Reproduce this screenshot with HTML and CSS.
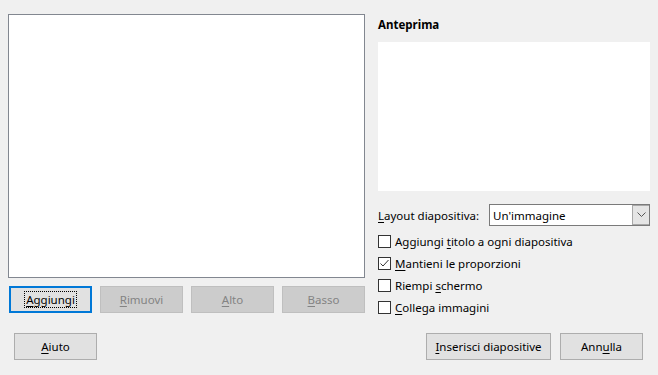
FILE: index.html
```html
<!doctype html>
<html lang="it">

<head>
  <meta charset="utf-8">
  <title>Album fotografico</title>
  <link rel="stylesheet" href="styles.css">
</head>

<body>
  <div class="dialog">
    <div class="main">
      <!-- left: image list and its buttons -->
      <div class="left">
        <div class="listbox"></div>
        <div class="list-buttons">
          <button class="button focused"><span class="focus-rect"><u>A</u>ggiungi</span></button>
          <button class="button" disabled><u>R</u>imuovi</button>
          <button class="button" disabled><u>A</u>lto</button>
          <button class="button" disabled><u>B</u>asso</button>
        </div>
      </div>

      <!-- right: preview and options -->
      <div class="right">
        <h3>Anteprima</h3>
        <div class="preview"></div>

        <div class="layout-row">
          <label class="layout-label"><u>L</u>ayout diapositiva:</label>
          <div class="combo">
            <span class="combo-text">Un'immagine</span>
            <span class="combo-button">
              <svg width="9" height="6" viewBox="0 0 9 6"><path d="M0.5 0.5 L4.5 4.5 L8.5 0.5" fill="none" stroke="#555" stroke-width="1"/></svg>
            </span>
          </div>
        </div>

        <div class="checks">
          <div class="check"><span class="box"></span><span>Aggiungi <u>t</u>itolo a ogni diapositiva</span></div>
          <div class="check"><span class="box">
            <svg width="11" height="11" viewBox="0 0 11 11"><path d="M1.5 5.5 L4 8 L9.5 2" fill="none" stroke="#333" stroke-width="1"/></svg>
          </span><span><u>M</u>antieni le proporzioni</span></div>
          <div class="check"><span class="box"></span><span>Riempi <u>s</u>chermo</span></div>
          <div class="check"><span class="box"></span><span><u>C</u>ollega immagini</span></div>
        </div>
      </div>
    </div>

    <div class="footer">
      <button class="button wide"><u>A</u>iuto</button>
      <div class="spacer"></div>
      <button class="button insert"><u>I</u>nserisci diapositive</button>
      <button class="button wide">Ann<u>u</u>lla</button>
    </div>
  </div>
</body>
</html>
```

FILE: styles.css
```css
html {
  font-family: "Noto Sans", sans-serif;
  font-size: 11.5px;
  color: #000;
}

body {
  margin: 0;
  background-color: #F0F0F0;
}

u {
  text-decoration: underline;
  text-underline-offset: 2px;
}

.dialog {
  width: 658px;
  height: 375px;
  box-sizing: border-box;
  padding: 14px 0 0 8px;
  display: flex;
  flex-direction: column;
}

.main {
  display: flex;
  gap: 13px;
}

.left {
  width: 357px;
}

.listbox {
  height: 264px;
  box-sizing: border-box;
  background-color: #FFFFFF;
  border: 1px solid #828790;
}

.list-buttons {
  display: grid;
  grid-template-columns: repeat(4, 1fr);
  gap: 8px;
  margin: 8px 0 0 1px;
}

.button {
  height: 27px;
  box-sizing: border-box;
  background-color: #E1E1E1;
  border: 1px solid #ADADAD;
  padding: 0;
  font-family: inherit;
  font-size: 11.5px;
  color: #000;
}

.button:disabled {
  background-color: #CCCCCC;
  border-color: #BFBFBF;
  color: #838383;
}

.focused {
  border: 2px solid #0078D7;
}

.focus-rect {
  outline: 1px dotted #000;
  padding: 0 1px;
}

.right {
  width: 272px;
}

h3 {
  font-size: 11.5px;
  font-weight: 700;
  margin: 2px 0 0 0;
  line-height: 17px;
}

.preview {
  height: 149px;
  margin-top: 9px;
  background-color: #FFFFFF;
}

.layout-row {
  display: flex;
  align-items: center;
  margin-top: 13px;
}

.layout-label {
  width: 111px;
}

.combo {
  flex: 1;
  height: 22px;
  box-sizing: border-box;
  display: flex;
  align-items: center;
  background-color: #FFFFFF;
  border: 1px solid #7A7A7A;
}

.combo-text {
  flex: 1;
  padding-left: 3px;
}

.combo-button {
  width: 17px;
  height: 20px;
  box-sizing: border-box;
  display: flex;
  align-items: center;
  justify-content: center;
  background-color: #E5E5E5;
  border: 1px solid #A8A8A8;
  border-right: none;
}

.checks {
  margin-top: 4px;
}

.check {
  display: flex;
  align-items: center;
  height: 22px;
}

.box {
  width: 13px;
  height: 13px;
  box-sizing: border-box;
  border: 1px solid #333333;
  background-color: #FFFFFF;
  margin-right: 4px;
  display: flex;
  align-items: center;
  justify-content: center;
}

.footer {
  display: flex;
  gap: 9px;
  margin-top: 15px;
  padding: 0 15px 0 6px;
}

.spacer {
  flex: 1;
}

.wide {
  width: 83px;
}

.insert {
  width: 125px;
}
```
